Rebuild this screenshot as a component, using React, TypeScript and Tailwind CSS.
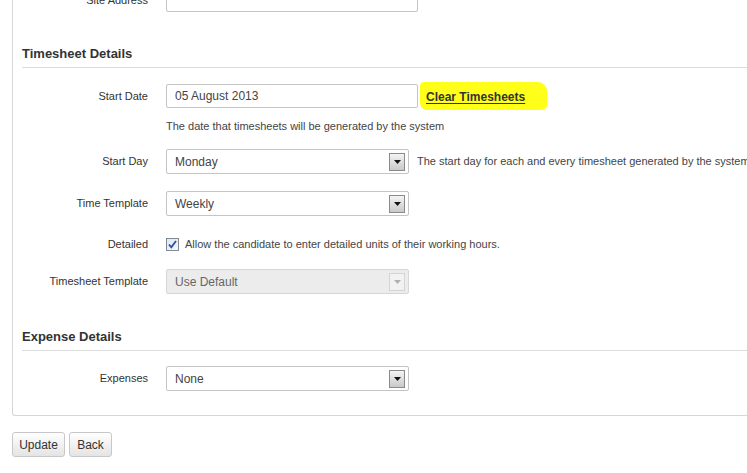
import React from "react";

const font = { fontFamily: '"Liberation Sans", Arial, sans-serif' };

function Arrow({ disabled }: { disabled?: boolean }) {
  return (
    <div
      className={`flex h-[18px] w-[16px] items-center justify-center border ${
        disabled
          ? "border-[#d4d4d4] bg-[#f2f2f2]"
          : "border-[#8a8a8a] bg-gradient-to-b from-[#f4f4f4] to-[#c9c9c9]"
      }`}
    >
      <svg width="7" height="4" viewBox="0 0 7 4">
        <path d="M0 0 L7 0 L3.5 4 Z" fill={disabled ? "#b0b0b0" : "#111"} />
      </svg>
    </div>
  );
}

function Select({ value, disabled }: { value: string; disabled?: boolean }) {
  return (
    <div
      className={`flex h-[25px] w-[243px] items-center justify-between rounded-[2px] border pl-[8px] pr-[3px] text-[12px] ${
        disabled
          ? "border-[#d6d6d6] bg-[#ececec] text-[#666]"
          : "border-[#c4c4c4] bg-white text-[#444]"
      }`}
    >
      <span>{value}</span>
      <Arrow disabled={disabled} />
    </div>
  );
}

function Row({ label, children, className = "" }: { label: string; children: React.ReactNode; className?: string }) {
  return (
    <div className={`flex items-center ${className}`}>
      <div className="w-[126px] shrink-0 text-right text-[11px] text-[#333]">{label}</div>
      <div className="ml-[18px] flex items-center">{children}</div>
    </div>
  );
}

function Heading({ title, className = "" }: { title: string; className?: string }) {
  return (
    <div className={`border-b border-[#dcdcdc] pb-[3px] ${className}`}>
      <div className="h-[20px] text-[13px] font-bold leading-[20px] text-[#333]">{title}</div>
    </div>
  );
}

export default function App() {
  return (
    <div className="h-[473px] w-[747px] overflow-hidden bg-white" style={font}>
      <div className="ml-[12px] mt-[-12px] rounded-bl-[3px] border-b border-l border-[#d6d6d6] pb-[24px] pl-[9px]">
        <Row label="Site Address">
          <div className="h-[24px] w-[252px] rounded-[2px] border border-[#c4c4c4] bg-white" />
        </Row>

        <Heading title="Timesheet Details" className="mt-[32px]" />

        <Row label="Start Date" className="mt-[14px]">
          <div className="flex h-[24px] w-[252px] items-center rounded-[2px] border border-[#c4c4c4] bg-white pl-[8px] text-[12px] text-[#444]">
            05 August 2013
          </div>
          <span className="ml-[2px] rounded-[4px_9px_5px_7px] bg-[#ffff1a] py-[2px] pl-[6px] pr-[22px]">
            <a className="text-[12px] font-bold text-[#333] underline underline-offset-2">Clear Timesheets</a>
          </span>
        </Row>

        <div className="ml-[144px] mt-[8px] h-[16px] text-[11px] leading-[16px] text-[#444]">
          The date that timesheets will be generated by the system
        </div>

        <Row label="Start Day" className="mt-[15px]">
          <Select value="Monday" />
          <span className="ml-[8px] whitespace-nowrap text-[11px] text-[#444]">
            The start day for each and every timesheet generated by the system
          </span>
        </Row>

        <Row label="Time Template" className="mt-[17px]">
          <Select value="Weekly" />
        </Row>

        <Row label="Detailed" className="mt-[20px] h-[16px]">
          <svg width="13" height="13" viewBox="0 0 13 13">
            <defs>
              <linearGradient id="cb" x1="0" y1="0" x2="1" y2="1">
                <stop offset="0" stopColor="#dfe6ee" />
                <stop offset="1" stopColor="#f6f8fb" />
              </linearGradient>
            </defs>
            <rect x="0.5" y="0.5" width="12" height="12" fill="url(#cb)" stroke="#7f8a96" />
            <path d="M3 6.5 L5.3 9.3 L10 3" fill="none" stroke="#2a4fa8" strokeWidth="1.8" />
          </svg>
          <span className="ml-[6px] text-[11px] text-[#444]">
            Allow the candidate to enter detailed units of their working hours.
          </span>
        </Row>

        <Row label="Timesheet Template" className="mt-[17px]">
          <Select value="Use Default" disabled />
        </Row>

        <Heading title="Expense Details" className="mt-[33px]" />

        <Row label="Expenses" className="mt-[15px]">
          <Select value="None" />
        </Row>
      </div>

      <div className="ml-[12px] mt-[16px] flex gap-[4px]">
        <button className="h-[25px] w-[53px] rounded-[3px] border border-[#c8c8c8] bg-gradient-to-b from-[#ffffff] to-[#e4e4e4] text-[12px] text-[#333]">
          Update
        </button>
        <button className="h-[25px] w-[43px] rounded-[3px] border border-[#c8c8c8] bg-gradient-to-b from-[#ffffff] to-[#e4e4e4] text-[12px] text-[#333]">
          Back
        </button>
      </div>
    </div>
  );
}
